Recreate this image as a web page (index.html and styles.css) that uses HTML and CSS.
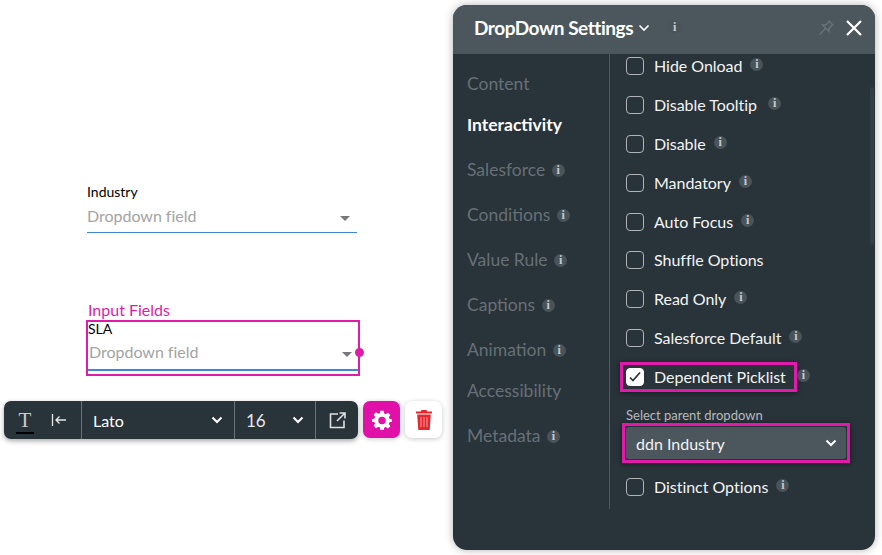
FILE: index.html
```html
<!DOCTYPE html>
<html lang="en">
<head>
<meta charset="utf-8">
<title>DropDown Settings</title>
<link rel="stylesheet" href="styles.css">
</head>
<body>
<main class="canvas">
  <section class="field field-plain">
    <div class="field-label">Industry</div>
    <div class="field-control">
      <span class="placeholder">Dropdown field</span>
      <span class="caret"></span>
    </div>
  </section>

  <div class="group-title">Input Fields</div>
  <section class="field field-selected">
    <div class="field-label">SLA</div>
    <div class="field-control">
      <span class="placeholder">Dropdown field</span>
      <span class="caret"></span>
    </div>
    <span class="handle"></span>
  </section>

  <div class="tools">
    <div class="toolbar">
      <div class="tb-group tb-text">
        <span class="tb-t">T</span>
        <svg class="tb-indent" width="16" height="14" viewBox="0 0 16 14"><path d="M1.500 1v12M15 7H5M8.500 3.500 5 7l3.500 3.500" fill="none" stroke="#e6e8e9" stroke-width="1.300"/></svg>
      </div>
      <div class="tb-group tb-font"><span>Lato</span>
        <svg width="12" height="8" viewBox="0 0 12 8"><path d="M1.500 1.500 6 6l4.500-4.500" fill="none" stroke="#fff" stroke-width="2"/></svg>
      </div>
      <div class="tb-group tb-size"><span>16</span>
        <svg width="12" height="8" viewBox="0 0 12 8"><path d="M1.500 1.500 6 6l4.500-4.500" fill="none" stroke="#fff" stroke-width="2"/></svg>
      </div>
      <div class="tb-group tb-link">
        <svg width="17" height="17" viewBox="0 0 17 17"><path d="M9 2H1.500v13.500H15V8.500M10.500 1H16v5.500M16 1 8 9" fill="none" stroke="#dfe1e2" stroke-width="1.600"/></svg>
      </div>
    </div>
    <button class="tool-btn tool-gear" type="button">
      <svg width="20" height="20" viewBox="0 0 24 24"><path fill="#fff" fill-rule="evenodd" d="M10 1h4l.6 3.200 1.900.8 2.700-1.800 2.800 2.800-1.800 2.700.8 1.900L24 11v3l-3 .8-.8 1.900 1.800 2.700-2.800 2.800-2.700-1.800-1.900.8L14 24h-4l-.6-3.200-1.900-.8-2.700 1.800L2 19l1.800-2.700-.8-1.600L0 14v-3l3-.8.8-1.900L2 5.600 4.800 2.800l2.700 1.800 1.900-.8L10 1Zm2 7a4.500 4.500 0 1 0 0 9 4.500 4.500 0 0 0 0-9Z"/></svg>
    </button>
    <button class="tool-btn tool-trash" type="button">
      <svg width="16" height="20" viewBox="0 0 16 20"><path fill="#e5262c" d="M5.500 0h5l.7 1.500H16v2H0v-2h4.800L5.500 0ZM1.200 4.500h13.600L13.700 20H2.300L1.200 4.500Z"/><path d="M5 7v10M8 7v10M11 7v10" stroke="#f4a0a2" stroke-width="1"/></svg>
    </button>
  </div>
</main>

<aside class="panel">
  <header class="panel-head">
    <h1 class="panel-title">DropDown Settings</h1>
    <svg class="title-chevron" width="12" height="8" viewBox="0 0 12 8"><path d="M1.500 1.500 6 6l4.500-4.500" fill="none" stroke="#fff" stroke-width="1.600"/></svg>
    <span class="info info-head">i</span>
    <svg class="pin" width="17" height="17" viewBox="0 0 17 17"><path d="M10.500 1.500 15.500 6.500M11.500 2.500 7.500 6 4.500 6 11 12.500 11 9.500 14.500 5.500M7.500 9.500 1.500 15.500" fill="none" stroke="#687379" stroke-width="1.400"/></svg>
    <svg class="close" width="16" height="16" viewBox="0 0 16 16"><path d="M1 1l14 14M15 1 1 15" fill="none" stroke="#fff" stroke-width="2.200"/></svg>
  </header>
  <div class="panel-body">
    <nav class="side">
      <a class="side-item side-content">Content</a>
      <a class="side-item side-active">Interactivity</a>
      <a class="side-item side-wide">Salesforce <span class="info">i</span></a>
      <a class="side-item side-wide">Conditions <span class="info">i</span></a>
      <a class="side-item side-wide">Value Rule <span class="info">i</span></a>
      <a class="side-item side-wide">Captions <span class="info">i</span></a>
      <a class="side-item side-wide">Animation <span class="info">i</span></a>
      <a class="side-item side-tight">Accessibility</a>
      <a class="side-item side-wide">Metadata <span class="info">i</span></a>
    </nav>
    <div class="options">
      <label class="opt"><span class="box"></span>Hide Onload <span class="info">i</span></label>
      <label class="opt"><span class="box"></span>Disable Tooltip <span class="info info-far">i</span></label>
      <label class="opt"><span class="box"></span>Disable <span class="info">i</span></label>
      <label class="opt"><span class="box"></span>Mandatory <span class="info">i</span></label>
      <label class="opt"><span class="box"></span>Auto Focus <span class="info">i</span></label>
      <label class="opt"><span class="box"></span>Shuffle Options</label>
      <label class="opt"><span class="box"></span>Read Only <span class="info">i</span></label>
      <label class="opt"><span class="box"></span>Salesforce Default <span class="info">i</span></label>
      <label class="opt opt-dep">
        <span class="dep-mark"><span class="box box-on"><svg width="14" height="12" viewBox="0 0 14 12"><path d="M2 6.500 5 9.500l7-8" fill="none" stroke="#29333a" stroke-width="1.700"/></svg></span>Dependent Picklist</span>
        <span class="info info-dep">i</span>
      </label>
      <div class="parent">
        <div class="parent-label">Select parent dropdown</div>
        <div class="parent-mark">
          <div class="parent-select"><span>ddn Industry</span>
            <svg width="12" height="8" viewBox="0 0 12 8"><path d="M1.500 1.500 6 6l4.500-4.500" fill="none" stroke="#fff" stroke-width="2"/></svg>
          </div>
        </div>
      </div>
      <label class="opt"><span class="box"></span>Distinct Options <span class="info">i</span></label>
    </div>
    <span class="scrollbar"></span>
  </div>
</aside>
</body>
</html>
```
FILE: styles.css
```css
* { box-sizing: border-box; }
html, body { margin: 0; height: 555px; overflow: hidden; }
body { background: #fff; font-family: Lato, sans-serif; position: relative; width: 882px; }

.canvas { display: flex; flex-direction: column; padding: 183px 0 0 0; }

.field { width: 274px; margin-left: 86px; position: relative; }
.field-plain { padding-left: 1px; width: 271px; }
.field-label { font-size: 14px; line-height: 17px; color: #000; }
.field-control { display: flex; align-items: center; justify-content: space-between; height: 33px; border-bottom: 1px solid #3f87d6; padding: 0 7px 0 0; }
.placeholder { font-size: 16px; color: #a3a3a3; line-height: 30px; letter-spacing: -.02px; }
.caret { width: 0; height: 0; border-left: 5px solid transparent; border-right: 5px solid transparent; border-top: 5px solid #77777d; margin-top: 4px; }

.group-title { margin: 67px 0 0 88px; font-size: 16px; line-height: 19px; color: #e01ba9; }

.field-selected { border: 2px solid #e01ba9; height: 56px; margin-top: 1px; }
.field-selected .field-label { line-height: 13px; }
.field-selected .field-control { height: 36px; padding: 0 6px 0 1px; border-bottom: 2px solid #3f87d6; }
.field-selected .caret { margin-top: 5px; }
.handle { position: absolute; right: -6px; top: 26px; width: 9px; height: 9px; border-radius: 50%; background: #e01ba9; }

.tools { display: flex; gap: 5px; margin: 25px 0 0 4px; }
.toolbar { display: flex; width: 354px; height: 38px; border-radius: 7px; background: #29333a; box-shadow: 0 2px 5px rgba(0,0,0,.35); color: #fff; }
.tb-group { display: flex; align-items: center; height: 100%; border-left: 1px solid #68737a; }
.tb-group:first-child { border-left: 0; }
.tb-text { width: 77px; padding-left: 12px; gap: 17px; }
.tb-t { font: 21px/24px "Liberation Serif", serif; color: #c9cdcf; border-bottom: 2px solid #000; width: 18px; text-align: center; height: 26px; margin-top: 1px; }
.tb-font { width: 153px; padding: 0 11px; justify-content: space-between; font-size: 16px; }
.tb-size { width: 81px; padding: 0 11px; justify-content: space-between; font-size: 17px; color: #e6e8e9; }
.tb-link { flex: 1; padding-left: 13px; }
.tool-btn { width: 37px; height: 37px; border: 0; border-radius: 7px; padding: 0; display: flex; align-items: center; justify-content: center; box-shadow: 0 1px 5px rgba(0,0,0,.22); }
.tool-gear { background: #e010a8; }
.tool-trash { background: #fff; }

.panel { position: absolute; left: 453px; top: 5px; width: 422px; height: 545px; border-radius: 14px; background: #29333a; box-shadow: 0 0 9px rgba(0,0,0,.3); overflow: hidden; color: #fff; display: flex; flex-direction: column; }
.panel-head { height: 49px; flex: none; background: #4b575d; display: flex; align-items: center; padding: 0 13px 4px 21px; }
.panel-title { margin: 0; font-size: 19px; font-weight: 700; color: #fff; letter-spacing: -.45px; }
.title-chevron { margin-left: 5px; }
.info-head { margin-left: 18px; }
.pin { margin-left: auto; margin-right: 11px; }

.info { display: inline-flex; width: 13px; height: 13px; flex: none; align-items: center; justify-content: center; border-radius: 50%; background: #49535a; color: #c7cbcd; font: 700 12px/13px "Liberation Serif", serif; vertical-align: 2px; }

.panel-body { flex: 1; display: flex; position: relative; min-height: 0; }
.side { width: 157px; flex: none; height: 455px; border-right: 1px solid #4f5a60; padding: 19px 0 0 14px; display: flex; flex-direction: column; }
.side-item { font-size: 17.500px; line-height: 22px; color: #667076; white-space: nowrap; }
.side-item .info { margin-left: 2px; }
.side-content { height: 41px; }
.side-active { height: 45px; color: #fff; font-weight: 700; }
.side-wide { height: 45px; }
.side-tight { height: 45px; margin-top: -4px; }

.options { flex: 1; padding: 2px 0 0 16px; display: flex; flex-direction: column; gap: 18.900px; min-width: 0; }
.opt { display: flex; align-items: center; height: 20px; font-size: 16px; line-height: 20px; color: #f2f3f4; white-space: nowrap; letter-spacing: -.03px; }
.opt > .info { margin-left: 8px; margin-top: -3px; }
.opt > .info-far { margin-left: 11px; }
.box { display: inline-block; width: 18px; height: 18px; flex: none; margin-right: 10px; border: 1px solid #aeb3b6; border-radius: 4px; }
.box-on { background: #fff; border-color: #fff; display: inline-flex; align-items: center; justify-content: center; }

.opt-dep { position: relative; }
.dep-mark { display: flex; align-items: center; height: 30px; outline: 3px solid #e01ba9; outline-offset: -3px; margin-left: -6px; padding-left: 6px; width: 177px; box-shadow: 0 1px 5px rgba(0,0,0,.5); }
.opt-dep .info-dep { margin-left: 0; }

.parent { margin-top: 1px; height: 51px; }
.parent-label { font-size: 13px; line-height: 16px; color: #b6babc; }
.parent-mark { width: 228px; height: 40px; margin: 0 0 0 -4px; border: 3px solid #e01ba9; padding: 1px; box-shadow: 0 1px 5px rgba(0,0,0,.5); }
.parent-select { height: 100%; background: #4b575d; border-radius: 3px; display: flex; align-items: center; justify-content: space-between; padding: 0 9px 0 10px; font-size: 16px; color: #f2f3f4; }

.scrollbar { position: absolute; right: 1px; top: 33px; width: 4px; height: 158px; background: #343e45; border-radius: 2px; }
```
